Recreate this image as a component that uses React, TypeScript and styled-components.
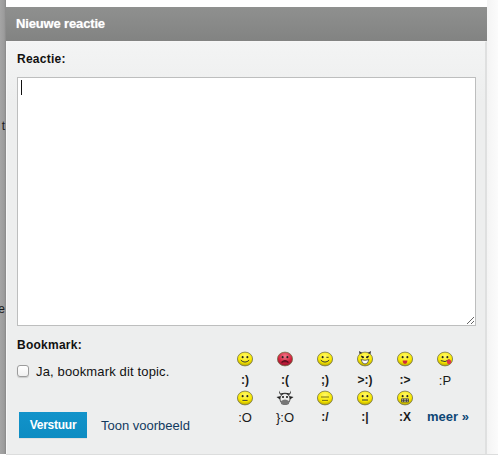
import React from "react";
import styled, { createGlobalStyle } from "styled-components";

const Global = createGlobalStyle`
  html, body { margin: 0; padding: 0; background: #fff; }
  body { font-family: "Liberation Sans", Arial, sans-serif; font-size: 13px; color: #111; }
`;

const Page = styled.div`
  position: relative;
  width: 498px;
  height: 460px;
  overflow: hidden;
  display: flex;
  background: #fff;
`;

const Backdrop = styled.div`
  position: relative;
  flex: 0 0 6px;
  overflow: hidden;
  height: 454px;
  background: linear-gradient(90deg, #a5a5a5 0%, #9b9b9b 70%, #888 100%);
`;

const Fragment = styled.span<{ $top: number }>`
  position: absolute;
  top: ${(p) => p.$top}px;
  right: 1px;
  font-size: 12px;
  line-height: 14px;
  color: #1b1b1b;
`;

const Dialog = styled.div`
  flex: 0 0 481px;
  box-sizing: border-box;
  padding-top: 7px;
  display: flex;
  flex-direction: column;
  height: 455px;
  border-bottom: 1px solid #dcdddd;
`;

const Header = styled.div`
  box-sizing: border-box;
  height: 34px;
  flex: none;
  display: flex;
  align-items: center;
  padding: 0 0 2px 10px;
  background: linear-gradient(180deg, #8f908f 0%, #828382 100%);
  color: #fff;
  font-weight: bold;
  font-size: 13px;
  letter-spacing: -0.15px;
  text-shadow: 0 0 1px rgba(255, 255, 255, 0.6);
`;

const Body = styled.div`
  flex: 1;
  padding: 10px 9px 0 10px;
  background: linear-gradient(180deg, #f3f4f4 0%, #edeeee 60px);
  border-left: 1px solid #f7f7f7;
  border-right: 2px solid #dfe0e0;
  border-top: 1px solid #f6f6f6;
`;

const Label = styled.div`
  font-weight: bold;
  font-size: 12px;
  letter-spacing: 0.25px;
  line-height: 14px;
  color: #111;
`;

const EditorWrap = styled.div`
  position: relative;
  margin-top: 11px;
  width: 459px;
  height: 249px;
`;

const Editor = styled.textarea`
  display: block;
  box-sizing: border-box;
  width: 100%;
  height: 100%;
  border: 1px solid #bdbebe;
  background: #fff;
  outline: none;
  padding: 3px;
  margin: 0;
  caret-color: transparent;
`;

const Caret = styled.span`
  position: absolute;
  left: 4px;
  top: 3px;
  width: 1px;
  height: 15px;
  background: #111;
`;

const Lower = styled.div`
  display: flex;
  margin-top: 12px;
`;

const LeftCol = styled.div`
  flex: 0 0 208px;
`;

const CheckRow = styled.label`
  display: flex;
  align-items: center;
  margin-top: 11px;
  gap: 7px;
  height: 16px;
  font-size: 13px;
  letter-spacing: 0.15px;
  color: #111;
`;

const Box = styled.span`
  box-sizing: border-box;
  width: 12px;
  height: 12px;
  border: 1px solid #9c9c9c;
  border-radius: 3px;
  background: linear-gradient(180deg, #fff 0%, #f0f0f0 100%);
  box-shadow: 0 1px 1px rgba(0, 0, 0, 0.15);
`;

const Actions = styled.div`
  display: flex;
  align-items: center;
  margin: 33px 0 0 2px;
  gap: 14px;
`;

const SendButton = styled.button`
  width: 68px;
  height: 26px;
  padding: 0;
  border: 0;
  background: linear-gradient(180deg, #1293ca 0%, #0d8cc2 100%);
  color: #fff;
  font: bold 12px "Liberation Sans", Arial, sans-serif;
  letter-spacing: -0.25px;
  box-shadow: 0 1px 0 #dfe0e0;
`;

const Preview = styled.a`
  color: #123a5e;
  font-size: 13px;
`;

const SmileyGrid = styled.div`
  display: grid;
  grid-template-columns: repeat(6, 40px);
  grid-auto-rows: 39px;
  margin-top: 13px;
`;

const SmileyCell = styled.div`
  display: flex;
  flex-direction: column;
  align-items: center;
  height: 39px;
`;

const Code = styled.span<{ $gap: number }>`
  margin-top: ${(p) => p.$gap}px;
  font-size: 12px;
  line-height: 13px;
  font-weight: bold;
  color: #1a1a1a;
`;

const CodeLight = styled(Code)`
  font-weight: normal;
  font-size: 13px;
`;

const More = styled.a`
  align-self: start;
  justify-self: center;
  margin: 20px 0 0 6px;
  white-space: nowrap;
  font-weight: bold;
  font-size: 13px;
  line-height: 14px;
  color: #0d4675;
`;

const RightEdge = styled.div`
  flex: 1;
  box-sizing: border-box;
  background: linear-gradient(90deg, #f4f4f4, #fbfbfb);
  height: 455px;
  border-bottom: 1px solid #dcdddd;
`;

type Kind = "smile" | "sad" | "wink" | "evil" | "grin" | "tongue" | "neutral" | "cow" | "slant" | "flat" | "x";

const Smiley = ({ kind }: { kind: Kind }) => {
  if (kind === "cow") {
    return (
      <svg width="18" height="16" viewBox="0 0 18 16">
        <path d="M3 0.5 Q3 5 6 5 L12 5 Q15 5 15 0.5 L13.5 3.5 Q9 2 4.5 3.5Z" fill="#222" />
        <path d="M0.5 7 L5 6 L13 6 L17.5 7 L14 9.5 L4 9.5Z" fill="#222" />
        <ellipse cx="9" cy="9" rx="5" ry="5.5" fill="#eee" stroke="#333" strokeWidth="0.8" />
        <path d="M5 11 Q9 8 13 11 L13 14 Q9 16 5 14Z" fill="#777" />
        <circle cx="7" cy="7" r="1" fill="#111" />
        <circle cx="11" cy="7" r="1" fill="#111" />
      </svg>
    );
  }
  const sad = kind === "sad";
  const top = sad ? "#f27a8a" : "#fff96e";
  const mid = sad ? "#d0203c" : "#f8e800";
  const low = sad ? "#8e1530" : "#b3a200";
  const gid = `g-${kind}`;
  return (
    <svg width="16" height="16" viewBox="0 0 16 16">
      <defs>
        <radialGradient id={gid} cx="50%" cy="30%" r="70%">
          <stop offset="0%" stopColor={top} />
          <stop offset="65%" stopColor={mid} />
          <stop offset="100%" stopColor={low} />
        </radialGradient>
      </defs>
      <ellipse cx="8" cy="8" rx="7.6" ry="6.9" fill={`url(#${gid})`} stroke="#77764f" strokeWidth="0.8" />
      {kind === "evil" && <path d="M2.5 3 L2 0 L5.5 2Z M13.5 3 L14 0 L10.5 2Z" fill="#333" />}
      {kind === "evil" && <path d="M4 5 L7 6.5 M12 5 L9 6.5" stroke="#222" strokeWidth="1" />}
      {kind !== "slant" && <ellipse cx="5.6" cy="6.2" rx="1" ry="1.1" fill="#222" />}
      {kind === "wink" ? (
        <path d="M9.4 6.3 H11.6" stroke="#222" strokeWidth="0.9" />
      ) : kind !== "slant" ? (
        <ellipse cx="10.4" cy="6.2" rx="1" ry="1.1" fill="#222" />
      ) : null}
      {(kind === "smile" || kind === "wink") && (
        <path d="M3.8 9.2 Q8 13 12.2 9.2" stroke="#333" strokeWidth="1" fill="none" />
      )}
      {kind === "sad" && <path d="M4.5 11.5 Q8 7.8 11.5 11.5" stroke="#5a0d1c" strokeWidth="1.1" fill="#7c1226" />}
      {kind === "evil" && <path d="M4 8.6 Q8 10 12 8.6 Q11 13 8 13 Q5 13 4 8.6Z" fill="#fff" stroke="#333" strokeWidth="0.7" />}
      {kind === "grin" && <path d="M5.6 9.4 H10.4 Q10.2 12.8 8 12.8 Q5.8 12.8 5.6 9.4Z" fill="#d0283c" />}
      {kind === "tongue" && (
        <>
          <path d="M3.8 9.6 Q8 12 12.4 8.6" stroke="#333" strokeWidth="1" fill="none" />
          <ellipse cx="12" cy="10.8" rx="2.2" ry="2.4" fill="#e0304a" />
        </>
      )}
      {kind === "neutral" && <path d="M5.4 10.4 H10.6" stroke="#333" strokeWidth="0.9" />}
      {kind === "flat" && <path d="M5 10 H11" stroke="#333" strokeWidth="1" />}
      {kind === "slant" && <path d="M4 7 H12 M5 10.4 H11" stroke="#6b6210" strokeWidth="0.9" />}
      {kind === "x" && <path d="M4.5 8.8 H11.5 V12 H4.5Z M6.5 8.8 V12 M9.5 8.8 V12 M4.5 10.4 H11.5" stroke="#333" strokeWidth="0.7" fill="#cfc9a0" />}
    </svg>
  );
};

const smileys: { kind: Kind; code: string; light?: boolean }[] = [
  { kind: "smile", code: ":)" },
  { kind: "sad", code: ":(" },
  { kind: "wink", code: ";)" },
  { kind: "evil", code: ">:)" },
  { kind: "grin", code: ":>" },
  { kind: "tongue", code: ":P", light: true },
  { kind: "neutral", code: ":O", light: true },
  { kind: "cow", code: "}:O", light: true },
  { kind: "slant", code: ":/" },
  { kind: "flat", code: ":|" },
  { kind: "x", code: ":X" },
];

export default function App() {
  return (
    <Page>
      <Global />
      <Backdrop>
        <Fragment $top={119}>t</Fragment>
        <Fragment $top={302}>e</Fragment>
      </Backdrop>
      <Dialog>
        <Header>Nieuwe reactie</Header>
        <Body>
          <Label>Reactie:</Label>
          <EditorWrap>
            <Editor aria-label="Reactie" />
            <Caret />
          </EditorWrap>
          <Lower>
            <LeftCol>
              <Label>Bookmark:</Label>
              <CheckRow>
                <Box />
                Ja, bookmark dit topic.
              </CheckRow>
              <Actions>
                <SendButton>Verstuur</SendButton>
                <Preview>Toon voorbeeld</Preview>
              </Actions>
            </LeftCol>
            <SmileyGrid>
              {smileys.map((s, i) => {
                const gap = i < 6 ? 7 : 5;
                return (
                  <SmileyCell key={s.code}>
                    <Smiley kind={s.kind} />
                    {s.light ? <CodeLight $gap={gap}>{s.code}</CodeLight> : <Code $gap={gap}>{s.code}</Code>}
                  </SmileyCell>
                );
              })}
              <More>meer »</More>
            </SmileyGrid>
          </Lower>
        </Body>
      </Dialog>
      <RightEdge />
    </Page>
  );
}
